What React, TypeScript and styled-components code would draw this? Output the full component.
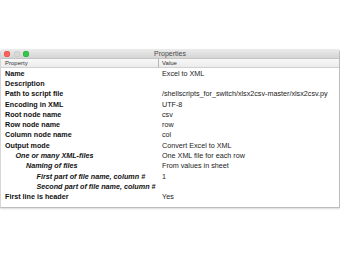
import { Fragment } from "react";
import styled, { createGlobalStyle } from "styled-components";

const GlobalStyle = createGlobalStyle`
  body {
    margin: 0;
    background: #ffffff;
    font-family: "Liberation Sans", Arial, sans-serif;
  }
`;

const Page = styled.div`
  width: 340px;
  height: 260px;
  padding-top: 49px;
  box-sizing: border-box;
  overflow: hidden;
`;

const Window = styled.div`
  width: 338px;
  display: flex;
  flex-direction: column;
  background: #ffffff;
  border: 1px solid #bdbdbd;
  border-top: none;
  border-left-color: #d6d6d6;
  border-radius: 4px 4px 0 0;
  box-shadow: 0 1px 2px rgba(0, 0, 0, 0.15);
  padding-bottom: 5px;
`;

const TitleBar = styled.div`
  position: relative;
  height: 9px;
  display: flex;
  align-items: center;
  justify-content: center;
  background: linear-gradient(#ebebeb, #d5d5d5);
  border-bottom: 1px solid #c4c4c4;
  border-radius: 4px 4px 0 0;
`;

const Lights = styled.div`
  position: absolute;
  left: 3px;
  top: 1.5px;
  display: flex;
  gap: 3.5px;
`;

const Light = styled.span<{ $color: string; $edge: string }>`
  width: 6px;
  height: 6px;
  border-radius: 50%;
  background: ${({ $color }) => $color};
  box-shadow: inset 0 0 0 0.5px ${({ $edge }) => $edge};
`;

const Title = styled.span`
  font-size: 7px;
  line-height: 9px;
  color: #4a4a4a;
`;

const Grid = styled.div`
  display: grid;
  grid-template-columns: 157px 1fr;
`;

const HeadCell = styled.div<{ $divider?: boolean }>`
  height: 8px;
  display: flex;
  align-items: center;
  padding-left: ${({ $divider }) => ($divider ? "3px" : "4px")};
  font-size: 6px;
  color: #333333;
  background: linear-gradient(#f8f8f8, #ececec);
  border-bottom: 1px solid #d0d0d0;
  border-left: ${({ $divider }) => ($divider ? "1px solid #b8b8b8" : "none")};
`;

const NameCell = styled.div<{ $level: number; $italic: boolean }>`
  height: 10.3px;
  display: flex;
  align-items: center;
  padding-left: ${({ $level }) => 4 + $level * 10.5}px;
  font-size: 7.2px;
  font-weight: bold;
  font-style: ${({ $italic }) => ($italic ? "italic" : "normal")};
  color: #111111;
  white-space: nowrap;
`;

const ValueCell = styled.div`
  height: 10.3px;
  display: flex;
  align-items: center;
  padding-left: 4px;
  font-size: 7.2px;
  color: #222222;
  white-space: nowrap;
`;

type Row = { name: string; value: string; level: number };

const rows: Row[] = [
  { name: "Name", value: "Excel to XML", level: 0 },
  { name: "Description", value: "", level: 0 },
  { name: "Path to script file", value: "/shellscripts_for_switch/xlsx2csv-master/xlsx2csv.py", level: 0 },
  { name: "Encoding in XML", value: "UTF-8", level: 0 },
  { name: "Root node name", value: "csv", level: 0 },
  { name: "Row node name", value: "row", level: 0 },
  { name: "Column node name", value: "col", level: 0 },
  { name: "Output mode", value: "Convert Excel to XML", level: 0 },
  { name: "One or many XML-files", value: "One XML file for each row", level: 1 },
  { name: "Naming of files", value: "From values in sheet", level: 2 },
  { name: "First part of file name, column #", value: "1", level: 3 },
  { name: "Second part of file name, column #", value: "", level: 3 },
  { name: "First line is header", value: "Yes", level: 0 },
];

export default function App() {
  return (
    <Page>
      <GlobalStyle />
      <Window>
        <TitleBar>
          <Lights>
            <Light $color="#fc605c" $edge="#de4a46" />
            <Light $color="#d9d9d9" $edge="#c4c4c4" />
            <Light $color="#34c84a" $edge="#27a83a" />
          </Lights>
          <Title>Properties</Title>
        </TitleBar>
        <Grid>
          <HeadCell>Property</HeadCell>
          <HeadCell $divider>Value</HeadCell>
          {rows.map((r) => (
            <Fragment key={r.name}>
              <NameCell $level={r.level} $italic={r.level > 0}>
                {r.name}
              </NameCell>
              <ValueCell>{r.value}</ValueCell>
            </Fragment>
          ))}
        </Grid>
      </Window>
    </Page>
  );
}
